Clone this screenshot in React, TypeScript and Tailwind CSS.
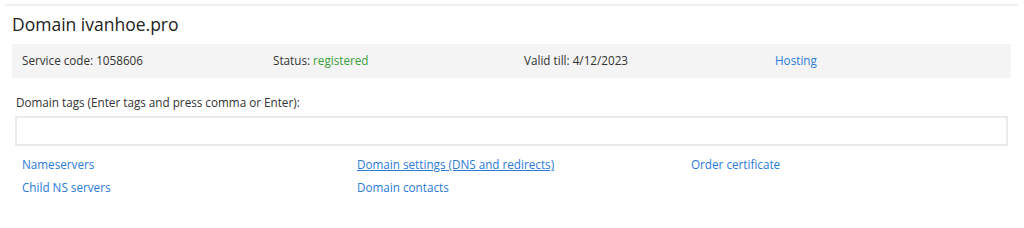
export default function App() {
  const links = [
    [
      { label: "Nameservers", underline: false },
      { label: "Child NS servers", underline: false },
    ],
    [
      { label: "Domain settings (DNS and redirects)", underline: true },
      { label: "Domain contacts", underline: false },
    ],
    [{ label: "Order certificate", underline: false }],
  ];

  return (
    <div className="h-[228px] w-[1024px] bg-white font-['Open_Sans',sans-serif] text-[#333]">
      <div className="ml-[5px] mr-[6px] pt-[4px]">
        <div className="h-[2px] bg-[#f0f0f0]" />
      </div>

      <div className="px-[12px]">
        <h1 className="mt-[5px] text-[17.5px] leading-[26px] text-[#222]">
          Domain ivanhoe.pro
        </h1>

        <div className="mt-[7px] mr-[1px] grid h-[34px] grid-cols-[251px_251px_251px_1fr] items-center bg-[#f4f4f4] px-[10px] text-[11.7px]">
          <span>Service code: 1058606</span>
          <span>
            Status: <span className="text-[#3a9e3a]">registered</span>
          </span>
          <span>Valid till: 4/12/2023</span>
          <a className="text-[#2a7ad8] no-underline" href="#">
            Hosting
          </a>
        </div>

        <div className="mt-[15px] pl-[4px] text-[11.7px] leading-[18px]">
          Domain tags (Enter tags and press comma or Enter):
        </div>

        <div className="ml-[3px] mr-[4px] mt-[5px] h-[30px] border-2 border-[#ebebeb] bg-white" />

        <div className="mt-[9px] grid grid-cols-[335px_334px_1fr] pl-[10px] text-[11.7px]">
          {links.map((col, i) => (
            <div key={i} className="flex flex-col items-start gap-[5px]">
              {col.map((l) => (
                <a
                  key={l.label}
                  href="#"
                  className={`leading-[18px] text-[#2a7ad8] ${l.underline ? "underline" : "no-underline"}`}
                >
                  {l.label}
                </a>
              ))}
            </div>
          ))}
        </div>
      </div>
    </div>
  );
}
